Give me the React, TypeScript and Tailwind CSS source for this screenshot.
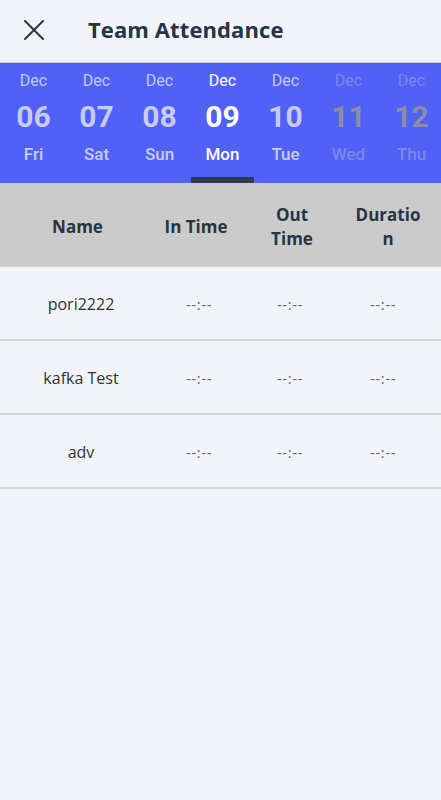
import * as React from "react"

type Day = { month: string; date: string; weekday: string; state: "past" | "active" | "future" }

const days: Day[] = [
  { month: "Dec", date: "06", weekday: "Fri", state: "past" },
  { month: "Dec", date: "07", weekday: "Sat", state: "past" },
  { month: "Dec", date: "08", weekday: "Sun", state: "past" },
  { month: "Dec", date: "09", weekday: "Mon", state: "active" },
  { month: "Dec", date: "10", weekday: "Tue", state: "past" },
  { month: "Dec", date: "11", weekday: "Wed", state: "future" },
  { month: "Dec", date: "12", weekday: "Thu", state: "future" },
]

const members = ["pori2222", "kafka Test", "adv"]

function DayCell({ day }: { day: Day }) {
  const monthColor =
    day.state === "active" ? "text-white" : day.state === "future" ? "text-[#7d86ea]" : "text-[#c3c8f6]"
  const dateColor =
    day.state === "active" ? "text-white" : day.state === "future" ? "text-[#8a8ca8]" : "text-[#c8ccf2]"
  const weekColor =
    day.state === "active" ? "text-white" : day.state === "future" ? "text-[#7d86ea]" : "text-[#c8ccf6]"

  return (
    <div className="flex flex-col items-center pt-[7px]">
      <span className={`text-[16px] leading-[22px] ${monthColor}`}>{day.month}</span>
      <span className={`mt-[7px] text-[30px] font-bold leading-[36px] ${dateColor}`}>{day.date}</span>
      <span className={`mt-[8px] text-[17px] font-medium leading-[22px] ${weekColor}`}>{day.weekday}</span>
      <div className={`mt-[12px] h-[6px] w-[63px] ${day.state === "active" ? "bg-[#2e3a52]" : "bg-transparent"}`} />
    </div>
  )
}

export default function App() {
  return (
    <div className="flex h-[800px] w-[441px] flex-col bg-[#f3f4f9] font-['Open_Sans',sans-serif]">
      <header className="flex h-[63px] items-center border-b border-[#c9cbe0] pb-[4px]">
        <button className="ml-[22px] mt-[2px] flex h-[24px] w-[24px] items-center justify-center text-[#2c3444]">
          <svg width="22" height="22" viewBox="0 0 22 22" fill="none" stroke="currentColor" strokeWidth="2" strokeLinecap="round">
            <path d="M2 2 L20 20 M20 2 L2 20" />
          </svg>
        </button>
        <h1 className="ml-[42px] text-[22px] font-bold tracking-[0.1px] text-[#263445]">Team Attendance</h1>
      </header>

      <div className="grid h-[120px] grid-cols-[repeat(7,63px)] overflow-hidden bg-[#5161f5] pl-[2px] font-['Roboto',sans-serif]">
        {days.map((d) => (
          <DayCell key={d.date} day={d} />
        ))}
      </div>

      <div className="grid h-[84px] grid-cols-[155px_82px_110px_82px] items-center bg-[#cbcbcb] pt-[3px] text-center text-[17px] font-bold leading-[24px] text-[#263445]">
        <span>Name</span>
        <span>In Time</span>
        <span>
          Out
          <br />
          Time
        </span>
        <span>
          Duratio
          <br />n
        </span>
      </div>

      {members.map((name) => (
        <div
          key={name}
          className="grid h-[74px] grid-cols-[162px_74px_108px_78px] items-center border-b-2 border-[#d3d4d8] pt-[2px] text-center"
        >
          <span className="text-[16px] text-[#333333]">{name}</span>
          <span className="text-[15px] tracking-[0.6px] text-[#666666]">--:--</span>
          <span className="text-[15px] tracking-[0.6px] text-[#666666]">--:--</span>
          <span className="text-[15px] tracking-[0.6px] text-[#666666]">--:--</span>
        </div>
      ))}
    </div>
  )
}
